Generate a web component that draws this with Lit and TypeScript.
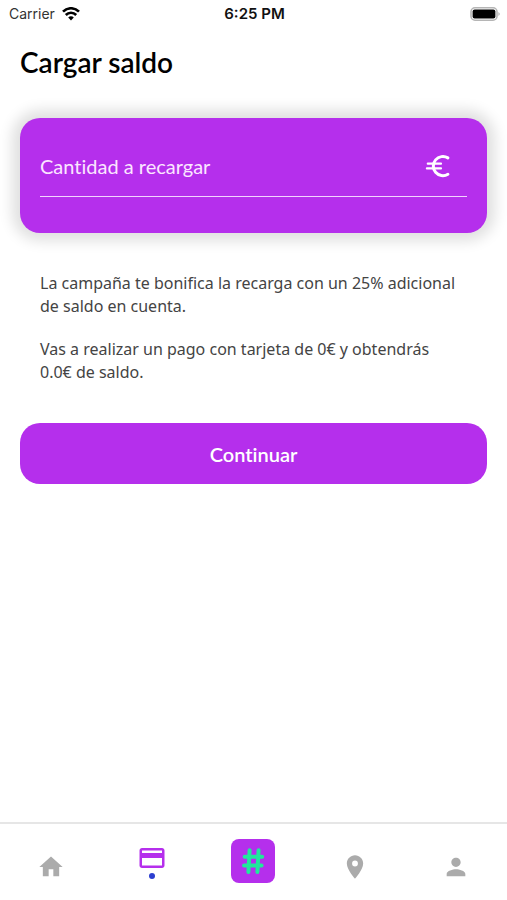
import { LitElement, css, html, svg } from "lit";
import { customElement, property, state } from "lit/decorators.js";

const icons = {
  home: svg`<path d="M10 20v-6h4v6h5v-8h3L12 3 2 12h3v8z"/>`,
  card: svg`<path d="M20 4H4c-1.11 0-1.99.89-1.99 2L2 18c0 1.11.89 2 2 2h16c1.11 0 2-.89 2-2V6c0-1.11-.89-2-2-2zm0 14H4v-6h16v6zm0-10H4V6h16v2z"/>`,
  place: svg`<path d="M12 2C8.13 2 5 5.13 5 9c0 5.25 7 13 7 13s7-7.75 7-13c0-3.87-3.13-7-7-7zm0 9.5a2.5 2.5 0 0 1 0-5 2.5 2.5 0 0 1 0 5z"/>`,
  person: svg`<path d="M12 12c2.21 0 4-1.79 4-4s-1.79-4-4-4-4 1.79-4 4 1.79 4 4 4zm0 2c-2.67 0-8 1.34-8 4v2h16v-2c0-2.66-5.33-4-8-4z"/>`,
};

@customElement("status-bar")
export class StatusBar extends LitElement {
  static styles = css`
    :host {
      display: grid;
      grid-template-columns: 1fr auto 1fr;
      align-items: center;
      height: 28px;
      padding: 0 7px 0 9px;
      font: 14px/28px Inter, sans-serif;
      color: #111;
    }
    .carrier {
      display: flex;
      align-items: center;
      gap: 7px;
      color: #333;
    }
    .time {
      font-size: 15px;
      font-weight: 600;
    }
    .battery {
      justify-self: end;
    }
    svg {
      display: block;
    }
  `;

  render() {
    return html`
      <span class="carrier">
        Carrier
        <svg width="18" height="14" viewBox="0 0 18 14" fill="none" stroke="#000" stroke-width="2.6" aria-hidden="true">
          <path d="M1 4.7C5.4.1 12.6.1 17 4.7" />
          <path d="M3.8 8c2.9-3 7.5-3 10.4 0" />
          <path d="M6.2 10.4c1.6-1.6 4-1.6 5.6 0L9 13.4z" fill="#000" stroke="none" />
        </svg>
      </span>
      <span class="time">6:25 PM</span>
      <svg class="battery" width="30" height="14" viewBox="0 0 30 14" aria-hidden="true">
        <rect x="1" y=".8" width="26" height="12.4" rx="4" fill="#fff" stroke="#b5b5b5" stroke-width="1.6" />
        <rect x="2.6" y="2.4" width="22.8" height="9.2" rx="2" fill="#000" />
        <path d="M28.4 5v4q1.4-.8 1.4-2t-1.4-2z" fill="#b5b5b5" />
      </svg>
    `;
  }
}

@customElement("tab-bar")
export class TabBar extends LitElement {
  static styles = css`
    :host {
      display: block;
      border-top: 2px solid #e6e6e6;
      padding: 15px 0 17px;
    }
    nav {
      display: grid;
      grid-template-columns: repeat(5, 1fr);
    }
    a {
      display: flex;
      flex-direction: column;
      align-items: center;
      justify-content: center;
      height: 44px;
      color: #ababab;
    }
    svg {
      display: block;
      fill: currentColor;
    }
    .plain {
      box-sizing: border-box;
      padding-top: 12px;
    }
    .active {
      color: #b52fec;
    }
    .dot {
      width: 6px;
      height: 6px;
      border-radius: 50%;
      background: #2c3fd0;
    }
    .tile {
      width: 44px;
      height: 44px;
      border-radius: 8px;
      background: #b52fec;
    }
    .tile svg {
      fill: none;
      stroke: #1fe99b;
      stroke-width: 4;
      stroke-linecap: round;
    }
  `;

  private plain(label: string, icon: unknown) {
    return html`<a class="plain" href="#" aria-label=${label}>
      <svg width="28" height="28" viewBox="0 0 24 24">${icon}</svg>
    </a>`;
  }

  render() {
    return html`<nav>
      ${this.plain("Inicio", icons.home)}
      <a class="active" href="#" aria-label="Saldo" aria-current="page">
        <svg width="30" height="30" viewBox="0 0 24 24">${icons.card}</svg>
        <span class="dot"></span>
      </a>
      <a href="#" aria-label="Código">
        <span class="tile">
          <svg width="44" height="44" viewBox="0 0 44 44">
            <path d="M18.6 11.2l-1.2 21.8M27.6 11.2l-1.2 21.8M13.6 17.8h17.6M13 26.6h17.6" />
          </svg>
        </span>
      </a>
      ${this.plain("Mapa", icons.place)} ${this.plain("Perfil", icons.person)}
    </nav>`;
  }
}

@customElement("app-root")
export class AppRoot extends LitElement {
  @property({ type: Number }) bonus = 25;
  @state() private amount = 0;

  static styles = css`
    :host {
      display: flex;
      flex-direction: column;
      min-height: 100vh;
      background: #fff;
      font-family: Lato, sans-serif;
      color: #000;
    }
    main {
      flex: 1;
      padding: 16px 20px 20px;
    }
    h1 {
      margin: 0 0 38px;
      font-size: 28px;
      line-height: 36px;
      font-weight: 600;
    }
    .panel {
      padding: 28px 20px 36px;
      border-radius: 20px;
      background: #b52fec;
      box-shadow: 0 0 14px 8px #e0e0e0;
    }
    .field {
      display: flex;
      align-items: center;
      justify-content: space-between;
      height: 40px;
      padding: 0 16px 10px 0;
      border-bottom: 1px solid #f3d3ff;
      color: #fff;
    }
    input {
      flex: 1;
      min-width: 0;
      height: 40px;
      box-sizing: border-box;
      margin: 0;
      padding: 0;
      border: 0;
      outline: 0;
      background: none;
      color: #fff;
      font: 20px/40px Lato, sans-serif;
      font-variant-ligatures: none;
    }
    input::placeholder {
      color: #fbe6ff;
      opacity: 1;
    }
    .euro {
      display: block;
      fill: none;
      stroke: #fff;
      stroke-linecap: round;
    }
    .info {
      padding: 39px 20px;
      font: 16px/23px "Noto Sans", sans-serif;
      color: #444;
    }
    p {
      margin: 0 0 20px;
    }
    p:last-child {
      margin: 0;
    }
    button {
      display: block;
      width: 100%;
      height: 61px;
      border: 0;
      border-radius: 20px;
      background: #b52fec;
      color: #fff;
      font: 600 20px/24px Lato, sans-serif;
      font-variant-ligatures: none;
    }
  `;

  private onInput(e: Event) {
    this.amount = Number((e.target as HTMLInputElement).value) || 0;
  }

  render() {
    const total = (this.amount * (1 + this.bonus / 100)).toFixed(1);
    const offer = `La campaña te bonifica la recarga con un ${this.bonus}% adicional de saldo en cuenta.`;
    const summary = `Vas a realizar un pago con tarjeta de ${this.amount}€ y obtendrás ${total}€\u00a0de\u00a0saldo.`;
    return html`
      <status-bar></status-bar>
      <main>
        <h1>Cargar saldo</h1>
        <section class="panel">
          <label class="field">
            <input
              inputmode="decimal"
              aria-label="Cantidad a recargar"
              placeholder="Cantidad a recargar"
              @input=${this.onInput}
            />
            <svg class="euro" width="26" height="26" viewBox="0 0 26 26" aria-hidden="true">
              <path d="M22.9 4.9A9.6 9.6 0 1 0 22.9 21.3" stroke-width="3" />
              <path d="M2.8 10.7H16M1.9 15.4H16" stroke-width="2.2" />
            </svg>
          </label>
        </section>
        <div class="info">
          <p>${offer}</p>
          <p>${summary}</p>
        </div>
        <button type="button">Continuar</button>
      </main>
      <tab-bar></tab-bar>
    `;
  }
}
